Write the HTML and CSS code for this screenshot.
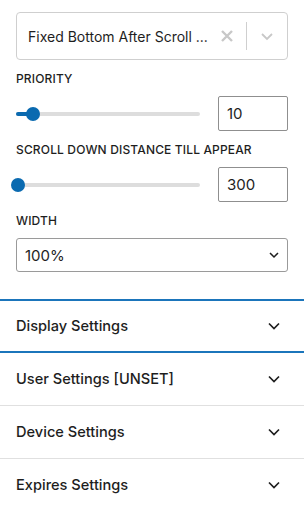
FILE: index.html
```html
<!DOCTYPE html>
<html>
<head>
<meta charset="utf-8">
<link rel="stylesheet" href="styles.css">
</head>
<body>
<div class="settings">
  <div class="rselect">
    <div class="rselect-value">Fixed Bottom After Scroll ...</div>
    <div class="rselect-clear">
      <svg width="14" height="14" viewBox="0 0 14 14"><path d="M2 2 L12 12 M12 2 L2 12" stroke="#c8c8c8" stroke-width="2.4" stroke-linecap="butt"/></svg>
    </div>
    <div class="rselect-sep"></div>
    <div class="rselect-arrow">
      <svg width="16" height="16" viewBox="0 0 16 16"><path d="M3 6 L8 11 L13 6" fill="none" stroke="#c8c8c8" stroke-width="1.8"/></svg>
    </div>
  </div>

  <div class="field">
    <div class="label">PRIORITY</div>
    <div class="range-row">
      <div class="range">
        <div class="range-track"></div>
        <div class="range-fill" style="width:17px"></div>
        <div class="range-thumb" style="left:17px"></div>
      </div>
      <div class="num">10</div>
    </div>
  </div>

  <div class="field">
    <div class="label">SCROLL DOWN DISTANCE TILL APPEAR</div>
    <div class="range-row">
      <div class="range">
        <div class="range-track"></div>
        <div class="range-thumb" style="left:2px"></div>
      </div>
      <div class="num">300</div>
    </div>
  </div>

  <div class="field">
    <div class="label">WIDTH</div>
    <div class="wselect">
      <span>100%</span>
      <svg width="12" height="12" viewBox="0 0 12 12"><path d="M2 4 L6 8 L10 4" fill="none" stroke="#1e1e1e" stroke-width="1.5"/></svg>
    </div>
  </div>
</div>

<div class="panels">
  <div class="panel panel-focus">
    <span>Display Settings</span>
    <svg class="chev" width="16" height="16" viewBox="0 0 16 16"><path d="M3 5.5 L8 10.5 L13 5.5" fill="none" stroke="#1e1e1e" stroke-width="1.7"/></svg>
  </div>
  <div class="panel">
    <span>User Settings [UNSET]</span>
    <svg class="chev" width="16" height="16" viewBox="0 0 16 16"><path d="M3 5.5 L8 10.5 L13 5.5" fill="none" stroke="#1e1e1e" stroke-width="1.7"/></svg>
  </div>
  <div class="panel">
    <span>Device Settings</span>
    <svg class="chev" width="16" height="16" viewBox="0 0 16 16"><path d="M3 5.5 L8 10.5 L13 5.5" fill="none" stroke="#1e1e1e" stroke-width="1.7"/></svg>
  </div>
  <div class="panel panel-last">
    <span>Expires Settings</span>
    <svg class="chev" width="16" height="16" viewBox="0 0 16 16"><path d="M3 5.5 L8 10.5 L13 5.5" fill="none" stroke="#1e1e1e" stroke-width="1.7"/></svg>
  </div>
</div>
</body>
</html>
```

FILE: styles.css
```css
html, body {
  margin: 0;
  padding: 0;
  background: #fff;
}
body {
  font-family: Inter, "Noto Sans", "Liberation Sans", sans-serif;
  color: #1e1e1e;
  width: 304px;
  overflow: hidden;
}
.settings {
  padding: 12px 16px 0;
  height: 287px;
}
.rselect {
  height: 46px;
  border: 1px solid #cfcfcf;
  border-radius: 4px;
  display: flex;
  align-items: center;
}
.rselect-value {
  flex: 1;
  padding-left: 11px;
  font-size: 14px;
  white-space: nowrap;
  overflow: hidden;
}
.rselect-clear {
  width: 14px;
  height: 14px;
  display: flex;
  margin-right: 12px;
}
.rselect-sep {
  width: 1px;
  height: 28px;
  background: #cfcfcf;
}
.rselect-arrow {
  width: 16px;
  height: 16px;
  display: flex;
  margin: 0 12px 0 12px;
}
.field {
  margin-top: 12px;
}
.label {
  font-size: 12px;
  font-weight: 500;
  letter-spacing: 0.15px;
  line-height: 14px;
  margin-bottom: 10px;
}
.range-row {
  display: flex;
  align-items: center;
  justify-content: space-between;
}
.range {
  position: relative;
  width: 184px;
  height: 14px;
}
.range-track {
  position: absolute;
  left: 0;
  right: 0;
  top: 5px;
  height: 4px;
  border-radius: 2px;
  background: #dddddd;
}
.range-fill {
  position: absolute;
  left: 0;
  top: 5px;
  height: 4px;
  border-radius: 2px;
  background: #0a6ab0;
}
.range-thumb {
  position: absolute;
  top: 0;
  width: 14px;
  height: 14px;
  margin-left: -7px;
  border-radius: 50%;
  background: #0a6ab0;
}
.num {
  width: 60px;
  height: 33px;
  border: 1px solid #8f8f8f;
  border-radius: 2px;
  font-size: 15px;
  line-height: 33px;
  padding-left: 8px;
}
.wselect {
  height: 32px;
  border: 1px solid #9a9a9a;
  border-radius: 3px;
  display: flex;
  align-items: center;
  justify-content: space-between;
  padding: 0 7px 0 8px;
  font-size: 15px;
}
.panels {
  border-top: 2px solid #1b75bb;
}
.panel {
  height: 52px;
  display: flex;
  align-items: center;
  justify-content: space-between;
  padding: 0 22px 0 16px;
  font-size: 14.6px;
  font-weight: 500;
  border-bottom: 1px solid #e0e0e0;
}
.panel-focus {
  height: 50px;
  border-bottom: 2px solid #1b75bb;
}
.panel-last {
  border-bottom: none;
}
.chev {
  display: block;
}
```
